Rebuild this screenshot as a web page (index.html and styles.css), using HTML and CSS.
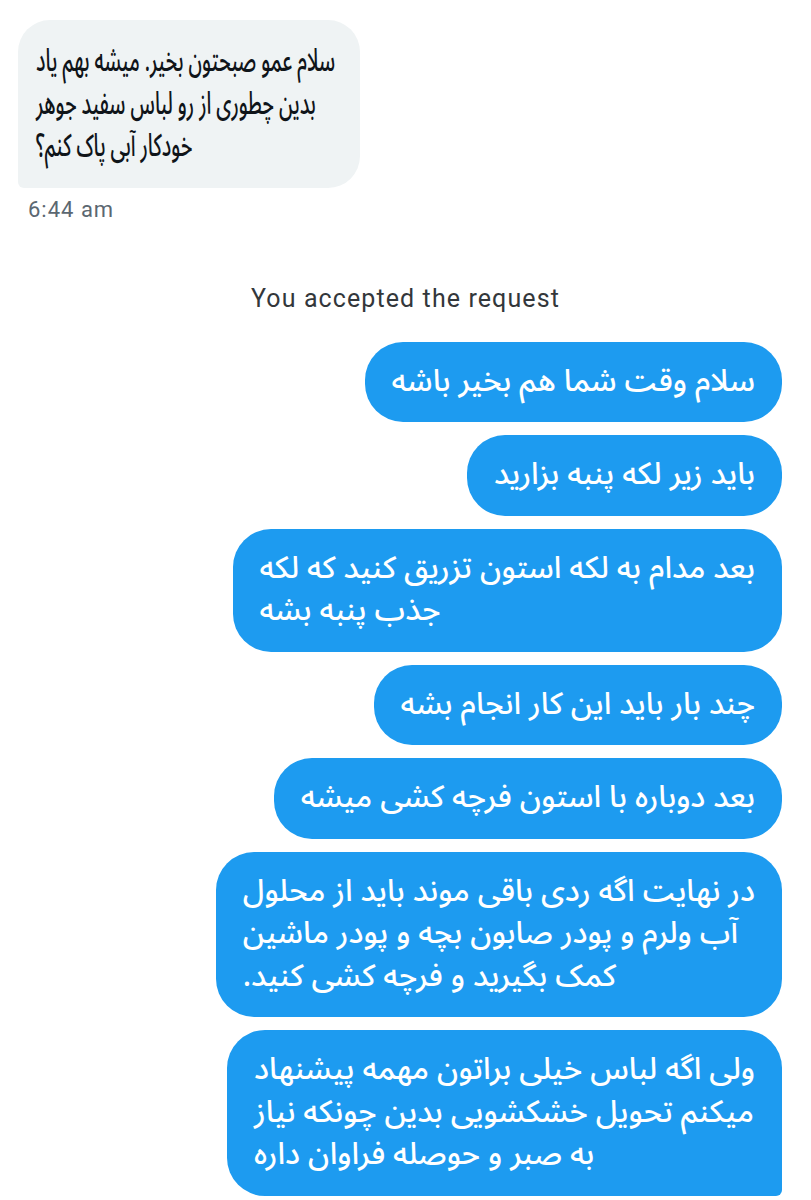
FILE: index.html
```html
<!DOCTYPE html>
<html lang="fa">
<head>
<meta charset="utf-8">
<link rel="stylesheet" href="styles.css">
</head>
<body>
<main class="chat">
  <div class="bubble bubble-in"><div class="in-text" dir="rtl">سلام عمو صبحتون بخیر. میشه بهم یاد<br>بدین چطوری از رو لباس سفید جوهر<br>خودکار آبی پاک کنم؟</div></div>
  <div class="time">6:44 am</div>
  <div class="notice">You accepted the request</div>
  <div class="out-group">
    <div class="bubble bubble-out" dir="rtl">سلام وقت شما هم بخیر باشه</div>
    <div class="bubble bubble-out" dir="rtl">باید زیر لکه پنبه بزارید</div>
    <div class="bubble bubble-out" dir="rtl">بعد مدام به لکه استون تزریق کنید که لکه<br>جذب پنبه بشه</div>
    <div class="bubble bubble-out" dir="rtl">چند بار باید این کار انجام بشه</div>
    <div class="bubble bubble-out" dir="rtl">بعد دوباره با استون فرچه کشی میشه</div>
    <div class="bubble bubble-out" dir="rtl">در نهایت اگه ردی باقی موند باید از محلول<br>آب ولرم و پودر صابون بچه و پودر ماشین<br>کمک بگیرید و فرچه کشی کنید.</div>
    <div class="bubble bubble-out last" dir="rtl">ولی اگه لباس خیلی براتون مهمه پیشنهاد<br>میکنم تحویل خشکشویی بدین چونکه نیاز<br>به صبر و حوصله فراوان داره</div>
  </div>
</main>
</body>
</html>
```
FILE: styles.css
```css
html, body {
  margin: 0;
  background: #ffffff;
}

.chat {
  display: flex;
  flex-direction: column;
  padding-top: 20px;
}

.bubble {
  font-family: "Noto Sans Arabic", "DejaVu Sans", sans-serif;
  font-size: 30.7px;
  font-weight: 500;
  line-height: 42.5px;
  padding: 19px 27px;
  text-align: left;
  white-space: nowrap;
}

.bubble-in {
  align-self: flex-start;
  box-sizing: border-box;
  width: 342px;
  margin-left: 18px;
  padding: 20px 18px;
  background: #eff3f4;
  color: #0f1419;
  border-radius: 32px 32px 32px 6px;
}

.in-text {
  width: max-content;
  font-size: 31.5px;
  text-align: left;
  transform: scaleX(0.615);
  transform-origin: 0 0;
}

.time {
  margin: 10px 0 0 28px;
  font-family: Roboto, "Liberation Sans", sans-serif;
  font-size: 22px;
  letter-spacing: 1px;
  line-height: 24px;
  color: #5b6771;
}

.notice {
  margin-top: 62px;
  text-align: center;
  font-family: Roboto, "Liberation Sans", sans-serif;
  font-size: 25px;
  letter-spacing: 1.1px;
  line-height: 30px;
  color: #33373b;
}

.out-group {
  display: flex;
  flex-direction: column;
  align-items: flex-end;
  gap: 13px;
  margin-top: 28px;
  padding-right: 29px;
}

.bubble-out {
  background: #1d9bf0;
  color: #ffffff;
  border-radius: 38px;
}

.bubble-out.last {
  border-bottom-right-radius: 6px;
}
```
